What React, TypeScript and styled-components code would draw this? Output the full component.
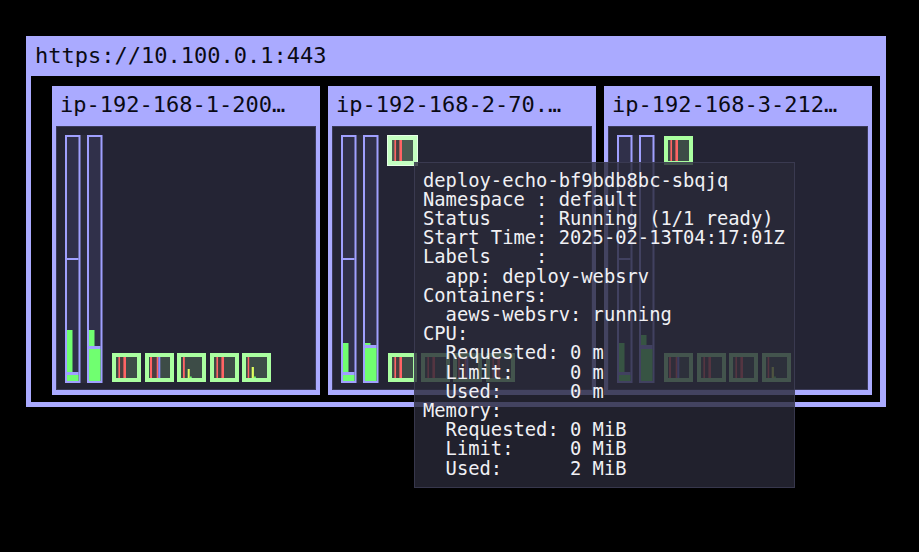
import React from 'react';
import styled, { createGlobalStyle } from 'styled-components';

const Global = createGlobalStyle`
  html, body { margin: 0; padding: 0; background: #000; }
  body { font-family: "DejaVu Sans Mono", "Liberation Mono", monospace; }
`;

const Page = styled.div`
  position: relative;
  width: 919px;
  height: 552px;
  box-sizing: border-box;
  padding: 36px 0 0 26px;
  background: #000;
`;

const Cluster = styled.div`
  width: 860px;
  box-sizing: border-box;
  background: #aaaaff;
  display: flex;
  flex-direction: column;
  padding: 0 6px 5px 5px;
`;

const ClusterTitle = styled.div`
  height: 40px;
  line-height: 40px;
  padding-left: 4px;
  font-size: 22px;
  color: #0a0a14;
  white-space: nowrap;
`;

const ClusterBody = styled.div`
  background: #000;
  display: flex;
  gap: 8px;
  padding: 10px 8px 7px 21px;
`;

const Node = styled.div`
  width: 268px;
  height: 309px;
  box-sizing: border-box;
  background: #aaaaff;
  display: flex;
  flex-direction: column;
  padding: 0 4px 5px 4px;
`;

const NodeTitle = styled.div`
  height: 40px;
  line-height: 38px;
  padding-left: 4px;
  font-size: 22px;
  color: #0a0a14;
  white-space: nowrap;
  overflow: hidden;
`;

const NodeBody = styled.div`
  flex: 1;
  background: #242434;
  border: 1px solid #3a3a58;
  display: flex;
  padding: 8px 0 0 8px;
`;

const PodArea = styled.div`
  margin-left: 9px;
  margin-top: 1px;
  height: 246px;
  display: flex;
  flex-direction: column;
  justify-content: space-between;
`;

const PodRow = styled.div`
  display: flex;
  gap: 3.5px;
  min-height: 29px;
`;

const PodBox = styled.div<{ $hover?: boolean }>`
  width: 29px;
  height: 29px;
  box-sizing: border-box;
  border: 4px solid ${(p) => (p.$hover ? '#c4ffc0' : '#aaffa0')};
  background: ${(p) => (p.$hover ? '#4a5c52' : '#3d4c47')};
  box-shadow: ${(p) => (p.$hover ? '0 0 0 1px #e6ffe6' : 'none')};
  svg { display: block; }
`;

const Tooltip = styled.div`
  position: absolute;
  left: 414px;
  top: 162px;
  background: rgba(41, 41, 56, 0.8);
  border: 1px solid rgba(70, 70, 96, 0.6);
  padding: 7.6px 9px 9px 8px;
  font-size: 18.8px;
  line-height: 19.2px;
  color: #f0f0f4;
  white-space: pre;
`;

const R = '#ff6464';
const Y = '#e0ff60';
const G = '#70ff70';
const BL = '#8c8cff';

type Rect = { x: number; w: number; y?: number; h?: number; c: string };

const PA: Rect[] = [
  { x: 2.4, w: 1.8, c: R },
  { x: 4.2, w: 3.2, c: '#4a3e40' },
  { x: 7.4, w: 2.6, c: R },
];
const PB: Rect[] = [
  { x: 1, w: 2.2, c: R },
  { x: 3.2, w: 4.5, c: '#4a3e40' },
  { x: 7.7, w: 1.6, c: R },
  { x: 9.3, w: 2, c: BL },
];
const PC: Rect[] = [
  { x: 2, w: 1.8, c: R },
  { x: 6.7, w: 2, y: 12, h: 9, c: Y },
  { x: 8.7, w: 2, y: 19.5, h: 1.5, c: G },
];
const PE: Rect[] = [
  { x: 1.7, w: 1.5, c: R },
  { x: 5.7, w: 2.2, y: 10, h: 11, c: Y },
  { x: 7.9, w: 2, y: 19.5, h: 1.5, c: G },
];

const Pod: React.FC<{ bars: Rect[]; hover?: boolean }> = ({ bars, hover }) => (
  <PodBox $hover={hover}>
    <svg width="21" height="21" viewBox="0 0 21 21">
      {bars.map((b, i) => (
        <rect key={i} x={b.x} width={b.w} y={b.y ?? 0} height={b.h ?? 21} fill={b.c} />
      ))}
    </svg>
  </PodBox>
);

type BarSpec = {
  marker?: number;
  narrow: [number, number];
  line: [number, number];
};

const Bar: React.FC<{ x: number; spec: BarSpec }> = ({ x, spec }) => (
  <g transform={`translate(${x},0)`}>
    <rect x={1} y={1} width={13.5} height={246} fill="#30304a" stroke="#a0a0ff" strokeWidth={2} />
    {spec.marker !== undefined && (
      <rect x={2} y={spec.marker} width={11.5} height={2} fill="#a0a0ff" />
    )}
    <rect x={2} y={spec.narrow[0]} width={5.5} height={spec.narrow[1] - spec.narrow[0]} fill={G} />
    <rect x={2} y={spec.line[0]} width={11.5} height={spec.line[1] - spec.line[0]} fill="#a0a0ff" />
    <rect x={2} y={spec.line[1]} width={11.5} height={246 - spec.line[1]} fill={G} />
  </g>
);

const Bars: React.FC<{ cpu: BarSpec; mem: BarSpec }> = ({ cpu, mem }) => (
  <svg width="38" height="248" viewBox="0 0 38 248">
    <rect x={14} y={0} width={9} height={248} fill="#2c2c3c" />
    <Bar x={0} spec={cpu} />
    <Bar x={22} spec={mem} />
  </svg>
);

type NodeData = {
  name: string;
  cpu: BarSpec;
  mem: BarSpec;
  top: { bars: Rect[]; hover?: boolean }[];
  bottom: Rect[][];
};

const nodes: NodeData[] = [
  {
    name: 'ip-192-168-1-200…',
    cpu: { marker: 123, narrow: [195, 237], line: [237, 240] },
    mem: { narrow: [195, 212], line: [211, 214] },
    top: [],
    bottom: [PA, PB, PC, PA, PE],
  },
  {
    name: 'ip-192-168-2-70.…',
    cpu: { marker: 123, narrow: [208, 237], line: [237, 240] },
    mem: { narrow: [208, 210], line: [210, 213] },
    top: [{ bars: PA, hover: true }],
    bottom: [PA, PA, PB, PA],
  },
  {
    name: 'ip-192-168-3-212…',
    cpu: { marker: 123, narrow: [208, 237], line: [237, 240] },
    mem: { narrow: [200, 210], line: [210, 214] },
    top: [{ bars: PA }],
    bottom: [PB, PA, PA, PE],
  },
];

const tooltipText = `deploy-echo-bf9bdb8bc-sbqjq
Namespace : default
Status    : Running (1/1 ready)
Start Time: 2025-02-13T04:17:01Z
Labels    :
  app: deploy-websrv
Containers:
  aews-websrv: running
CPU:
  Requested: 0 m
  Limit:     0 m
  Used:      0 m
Memory:
  Requested: 0 MiB
  Limit:     0 MiB
  Used:      2 MiB`;

export default function App() {
  return (
    <Page>
      <Global />
      <Cluster>
        <ClusterTitle>https://10.100.0.1:443</ClusterTitle>
        <ClusterBody>
          {nodes.map((n) => (
            <Node key={n.name}>
              <NodeTitle>{n.name}</NodeTitle>
              <NodeBody>
                <Bars cpu={n.cpu} mem={n.mem} />
                <PodArea>
                  <PodRow>
                    {n.top.map((p, i) => (
                      <Pod key={i} bars={p.bars} hover={p.hover} />
                    ))}
                  </PodRow>
                  <PodRow>
                    {n.bottom.map((p, i) => (
                      <Pod key={i} bars={p} />
                    ))}
                  </PodRow>
                </PodArea>
              </NodeBody>
            </Node>
          ))}
        </ClusterBody>
      </Cluster>
      <Tooltip>{tooltipText}</Tooltip>
    </Page>
  );
}
